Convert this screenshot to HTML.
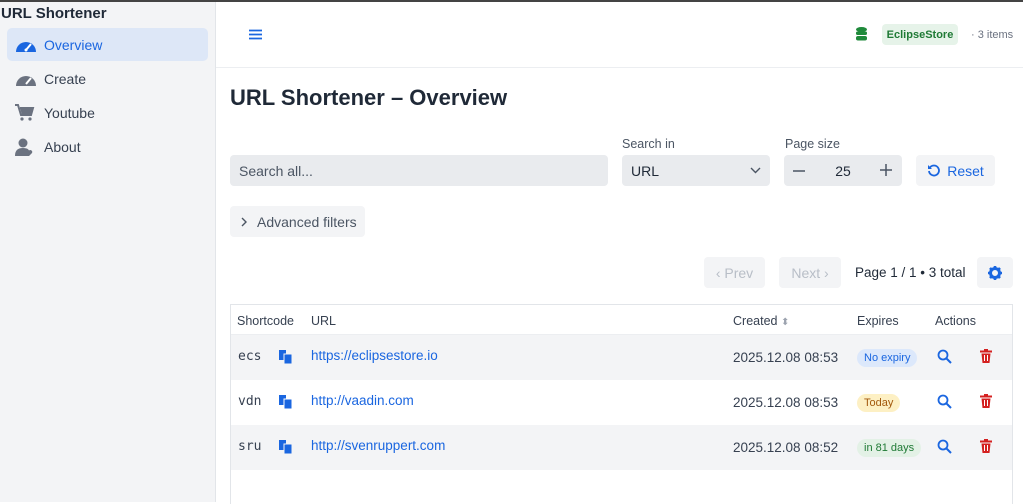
<!DOCTYPE html><html><head><style>
*{box-sizing:border-box;margin:0;padding:0}
body{width:1023px;height:502px;overflow:hidden;font-family:"Liberation Sans",sans-serif;background:#fff;color:#1f2937;position:relative}
.topbar{position:absolute;left:0;top:0;width:1023px;height:2px;background:#444}
.side{position:absolute;left:0;top:2px;width:216px;height:500px;background:#f3f4f6;border-right:1px solid #e2e5e9}
.brand{position:absolute;left:1px;top:3px;font-size:15px;font-weight:bold;color:#1f2937}
.nav{position:absolute;left:7px;width:201px;height:33px;border-radius:5px;font-size:14px;display:flex;align-items:center;color:#374151}
.nav svg{position:absolute;left:8px}
.nav span{position:absolute;left:37px}
.act{background:#dde7f7;color:#1a66e0}
.hdr{position:absolute;left:216px;top:2px;right:0;height:66px;border-bottom:1px solid #eceef1}
.abs{position:absolute}
.lbl{font-size:12.5px;color:#4b5563}
.in{background:#e9ebee;border-radius:4px;height:31px;font-size:14px;display:flex;align-items:center}
.btn{background:#f3f4f6;border-radius:4px;height:31px;font-size:14px;display:flex;align-items:center;justify-content:center}
.tbl{position:absolute;left:230px;top:304px;width:783px;height:200px;border:1px solid #e2e5e9;border-bottom:none}
.row{position:absolute;left:231px;width:781px;height:45px;font-size:13px}
.g{background:#f3f4f6}
.row div,.th div{position:absolute}
.th{position:absolute;left:231px;top:305px;width:781px;height:30px;font-size:12.5px;color:#374151;border-bottom:1px solid #eceef1}
.mono{font-family:"DejaVu Sans Mono",monospace;font-size:13px;color:#374151}
.link{color:#1a66e0;font-size:13.5px}
.date{font-size:13.5px;color:#374151}
.pill{font-size:11px;padding:3px 7px;border-radius:10px}
</style></head><body>
<div class="topbar"></div>
<div class="side">
<div class="brand">URL Shortener</div>
<div class="nav act" style="top:26px"><svg width="22" height="16" viewBox="0 0 22 16"><path d="M1 15A10 10 0 0 1 21 15Z" fill="#1a66e0"/><path d="M11 13L16 7" stroke="#fff" stroke-width="2"/><circle cx="11" cy="13" r="1.5" fill="#fff"/></svg><span>Overview</span></div>
<div class="nav" style="top:60px"><svg width="22" height="16" viewBox="0 0 22 16"><path d="M1 15A10 10 0 0 1 21 15Z" fill="#6b7280"/><path d="M11 13L16 7" stroke="#fff" stroke-width="2"/></svg><span>Create</span></div>
<div class="nav" style="top:94px"><svg width="20" height="18" viewBox="0 0 20 18"><path d="M0 1h3l3 10h10l2-7H5" stroke="#6b7280" stroke-width="2" fill="none"/><path d="M5 4h13l-2 7H7z" fill="#6b7280"/><circle cx="7" cy="15" r="1.6" fill="#6b7280"/><circle cx="15" cy="15" r="1.6" fill="#6b7280"/></svg><span>Youtube</span></div>
<div class="nav" style="top:128px"><svg width="20" height="18" viewBox="0 0 20 18"><circle cx="8" cy="5" r="4.5" fill="#6b7280"/><path d="M0 18c0-6 3-8 8-8s6 2 6 3v5z" fill="#6b7280"/><path d="M14 18l-3-3a2 2 0 0 1 3-2.5a2 2 0 0 1 3 2.5z" fill="#6b7280"/></svg><span>About</span></div>
</div>
<div class="hdr">
<svg class="abs" style="left:33px;top:27px" width="13" height="11"><path d="M0 1.5h13M0 5.5h13M0 9.5h13" stroke="#1a66e0" stroke-width="1.8"/></svg>
<svg class="abs" style="left:640px;top:25px" width="11" height="14" viewBox="0 0 11 14"><ellipse cx="5.5" cy="2.5" rx="5.5" ry="2.5" fill="#1f8a3b"/><rect x="0" y="4.5" width="11" height="3.5" rx="1.5" fill="#1f8a3b"/><rect x="0" y="9" width="11" height="4.5" rx="2" fill="#1f8a3b"/></svg>
<div class="abs" style="left:666px;top:22px;width:76px;height:21px;background:#e6f3e9;border-radius:4px;color:#1f7a35;font-size:11px;font-weight:bold;display:flex;align-items:center;justify-content:center">EclipseStore</div>
<div class="abs" style="left:755px;top:27px;font-size:11px;color:#6b7280">· 3 items</div>
</div>
<div class="abs" style="left:230px;top:85px;font-size:22px;font-weight:bold;color:#1f2937">URL Shortener – Overview</div>
<div class="abs lbl" style="left:622px;top:137px">Search in</div>
<div class="abs lbl" style="left:785px;top:137px">Page size</div>
<div class="abs in" style="left:230px;top:155px;width:378px;padding-left:9px;color:#4b5563">Search all...</div>
<div class="abs in" style="left:622px;top:155px;width:148px;padding-left:9px">URL<svg class="abs" style="left:128px;top:12px" width="11" height="7"><path d="M1 1l4.5 4.5L10 1" stroke="#4b5563" stroke-width="1.4" fill="none"/></svg></div>
<div class="abs in" style="left:784px;top:155px;width:118px;justify-content:center">25<svg class="abs" style="left:9px;top:15px" width="12" height="2"><path d="M0 1h12" stroke="#4b5563" stroke-width="1.5"/></svg><svg class="abs" style="left:96px;top:9px" width="12" height="12"><path d="M0 6h12M6 0v12" stroke="#4b5563" stroke-width="1.5"/></svg></div>
<div class="abs btn" style="left:916px;top:155px;width:79px;color:#1a66e0"><svg width="14" height="14" style="margin-right:6px" viewBox="0 0 14 14"><path d="M3 3.5A5 5 0 1 1 2 7" stroke="#1a66e0" stroke-width="1.8" fill="none"/><path d="M1 1v4h4z" fill="#1a66e0"/></svg>Reset</div>
<div class="abs btn" style="left:230px;top:206px;width:135px;color:#4b5563;justify-content:flex-start;padding-left:10px"><svg width="8" height="10" style="margin-right:9px"><path d="M2 1l4 4-4 4" stroke="#4b5563" stroke-width="1.4" fill="none"/></svg>Advanced filters</div>
<div class="abs btn" style="left:704px;top:257px;width:61px;color:#b8bec7">‹ Prev</div>
<div class="abs btn" style="left:779px;top:257px;width:62px;color:#b8bec7">Next ›</div>
<div class="abs" style="left:855px;top:265px;font-size:13.5px;color:#1f2937">Page 1 / 1 • 3 total</div>
<div class="abs btn" style="left:977px;top:257px;width:36px"><svg width="14" height="14" viewBox="0 0 14 14"><circle cx="7" cy="7" r="4.5" fill="none" stroke="#1a66e0" stroke-width="3"/><path d="M7 0v14M0 7h14M2 2l10 10M12 2L2 12" stroke="#1a66e0" stroke-width="2.6" stroke-dasharray="2.4 9.2 2.4 0"/></svg></div>
<div class="tbl"></div>
<div class="th"><div style="left:6px;top:9px">Shortcode</div><div style="left:80px;top:9px">URL</div><div style="left:502px;top:9px">Created <span style="color:#9ca3af;font-size:10px">⬍</span></div><div style="left:626px;top:9px">Expires</div><div style="left:704px;top:9px">Actions</div></div>
<div class="row g" style="top:335px"><div class="mono" style="left:7px;top:14px">ecs</div><div style="left:48px;top:15px"><svg width="13" height="14"><rect x="0" y="0" width="7" height="10" fill="#1a66e0"/><rect x="5" y="4" width="8" height="10" fill="#1a66e0" stroke="#f3f4f6"/></svg></div><div class="link" style="left:80px;top:13px">https://eclipsestore.io</div><div class="date" style="left:502px;top:15px">2025.12.08 08:53</div><div class="pill" style="left:626px;top:14px;background:#dce8fb;color:#1a66e0">No expiry</div><div style="left:706px;top:14px"><svg width="15" height="15"><circle cx="6" cy="6" r="4.5" stroke="#1a66e0" stroke-width="1.8" fill="none"/><path d="M9.5 9.5l4.5 4.5" stroke="#1a66e0" stroke-width="2"/></svg></div><div style="left:749px;top:14px"><svg width="12" height="14"><rect x="0" y="1.5" width="12" height="2" fill="#d42020"/><rect x="4" y="0" width="4" height="2" fill="#d42020"/><path d="M1.5 4.5h9l-1 9.5h-7z" fill="#d42020"/><path d="M4.5 6v6M7.5 6v6" stroke="#fff"/></svg></div></div>
<div class="row" style="top:380px"><div class="mono" style="left:7px;top:14px">vdn</div><div style="left:48px;top:15px"><svg width="13" height="14"><rect x="0" y="0" width="7" height="10" fill="#1a66e0"/><rect x="5" y="4" width="8" height="10" fill="#1a66e0" stroke="#fff"/></svg></div><div class="link" style="left:80px;top:13px">http://vaadin.com</div><div class="date" style="left:502px;top:15px">2025.12.08 08:53</div><div class="pill" style="left:626px;top:14px;background:#fdf0c4;color:#a2580c">Today</div><div style="left:706px;top:14px"><svg width="15" height="15"><circle cx="6" cy="6" r="4.5" stroke="#1a66e0" stroke-width="1.8" fill="none"/><path d="M9.5 9.5l4.5 4.5" stroke="#1a66e0" stroke-width="2"/></svg></div><div style="left:749px;top:14px"><svg width="12" height="14"><rect x="0" y="1.5" width="12" height="2" fill="#d42020"/><rect x="4" y="0" width="4" height="2" fill="#d42020"/><path d="M1.5 4.5h9l-1 9.5h-7z" fill="#d42020"/><path d="M4.5 6v6M7.5 6v6" stroke="#fff"/></svg></div></div>
<div class="row g" style="top:425px"><div class="mono" style="left:7px;top:14px">sru</div><div style="left:48px;top:15px"><svg width="13" height="14"><rect x="0" y="0" width="7" height="10" fill="#1a66e0"/><rect x="5" y="4" width="8" height="10" fill="#1a66e0" stroke="#f3f4f6"/></svg></div><div class="link" style="left:80px;top:13px">http://svenruppert.com</div><div class="date" style="left:502px;top:15px">2025.12.08 08:52</div><div class="pill" style="left:626px;top:14px;background:#e3f1e6;color:#1f7a35">in 81 days</div><div style="left:706px;top:14px"><svg width="15" height="15"><circle cx="6" cy="6" r="4.5" stroke="#1a66e0" stroke-width="1.8" fill="none"/><path d="M9.5 9.5l4.5 4.5" stroke="#1a66e0" stroke-width="2"/></svg></div><div style="left:749px;top:14px"><svg width="12" height="14"><rect x="0" y="1.5" width="12" height="2" fill="#d42020"/><rect x="4" y="0" width="4" height="2" fill="#d42020"/><path d="M1.5 4.5h9l-1 9.5h-7z" fill="#d42020"/><path d="M4.5 6v6M7.5 6v6" stroke="#fff"/></svg></div></div>
</body></html>
